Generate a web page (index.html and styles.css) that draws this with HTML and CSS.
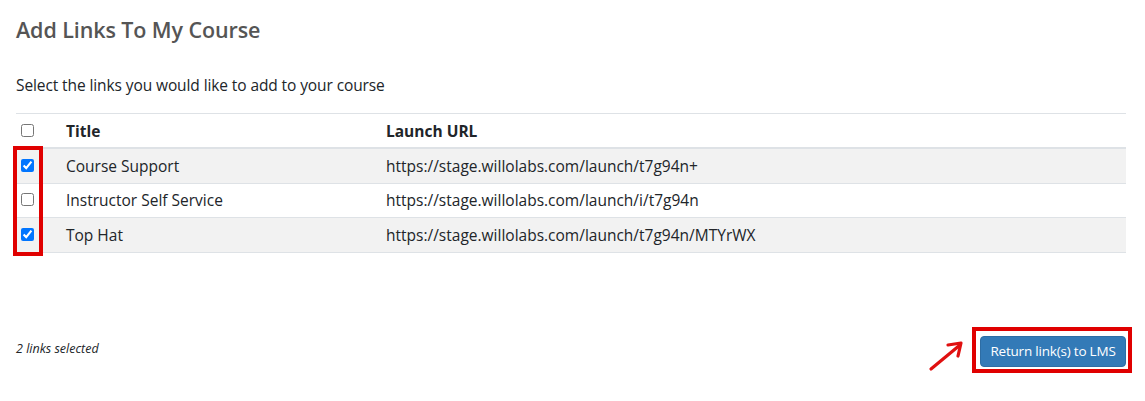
FILE: index.html
```html
<!DOCTYPE html>
<html>
<head>
<meta charset="utf-8">
<link rel="stylesheet" href="styles.css">
</head>
<body>
<div class="page">
  <h1 class="title">Add Links To My Course</h1>
  <p class="lead">Select the links you would like to add to your course</p>
  <div class="table-wrap">
    <table class="links">
      <thead>
        <tr>
          <th class="c-check"><input type="checkbox"></th>
          <th class="c-title">Title</th>
          <th class="c-url">Launch URL</th>
        </tr>
      </thead>
      <tbody>
        <tr class="odd">
          <td class="c-check"><input type="checkbox" checked></td>
          <td>Course Support</td>
          <td>https://stage.willolabs.com/launch/t7g94n+</td>
        </tr>
        <tr>
          <td class="c-check"><input type="checkbox"></td>
          <td>Instructor Self Service</td>
          <td>https://stage.willolabs.com/launch/i/t7g94n</td>
        </tr>
        <tr class="odd">
          <td class="c-check"><input type="checkbox" checked></td>
          <td>Top Hat</td>
          <td>https://stage.willolabs.com/launch/t7g94n/MTYrWX</td>
        </tr>
      </tbody>
    </table>
    <div class="mark-checks"></div>
  </div>
  <div class="footer">
    <span class="count">2 links selected</span>
    <div class="action">
      <svg class="arrow" width="40" height="34" viewBox="0 0 40 34">
        <line x1="4" y1="30" x2="33" y2="6" stroke="#e01010" stroke-width="3.2" stroke-linecap="round"/>
        <polyline points="21,6 34,4 31,17" fill="none" stroke="#e01010" stroke-width="3.2" stroke-linecap="round" stroke-linejoin="round"/>
      </svg>
      <div class="mark-btn">
        <button class="btn">Return link(s) to LMS</button>
      </div>
    </div>
  </div>
</div>
</body>
</html>
```
FILE: styles.css
```css
html, body {
  margin: 0;
  padding: 0;
  background: #fff;
}
body {
  font-family: "Open Sans", "Noto Sans", sans-serif;
  color: #212529;
}
.page {
  padding: 0 19px 0 16px;
}
.title {
  margin: 0;
  padding-top: 15px;
  font-size: 21.5px;
  font-weight: 600;
  color: #555;
  line-height: 30px;
  letter-spacing: -0.1px;
}
.lead {
  margin: 0;
  padding-top: 29px;
  font-size: 15.5px;
  line-height: 22px;
  letter-spacing: -0.1px;
  height: 39px;
}
.table-wrap {
  position: relative;
}
.links {
  width: 100%;
  border-collapse: collapse;
  font-size: 15.5px;
}
.links th, .links td {
  text-align: left;
  border-top: 1px solid #dee2e6;
  padding: 0 12px;
  height: 33.5px;
  vertical-align: middle;
}
.links thead th {
  border-bottom: 2px solid #dee2e6;
  font-weight: 700;
  height: 33px;
}
.links tbody tr:last-child td {
  border-bottom: 1px solid #dee2e6;
}
.links tr.odd td {
  background: #f2f2f2;
}
.links .c-check {
  width: 14px;
  padding: 0 20px 0 4px;
}
.links .c-title {
  width: 296px;
}
.links input {
  margin: 3px 0 0 1px;
  width: 13px;
  height: 13px;
}
.mark-checks {
  position: absolute;
  left: -3px;
  top: 33px;
  width: 22px;
  height: 102px;
  border: 4px solid #e00000;
}
.footer {
  display: flex;
  justify-content: space-between;
  align-items: center;
  margin-top: 74px;
}
.count {
  font-size: 12.5px;
  font-style: italic;
  margin-top: -2px;
}
.action {
  display: flex;
  align-items: center;
  margin-right: -6px;
}
.arrow {
  margin-right: 5px;
  margin-top: 12px;
}
.mark-btn {
  border: 4px solid #e00000;
  padding: 5px 2px 2px 4px;
}
.btn {
  display: block;
  background: #337ab7;
  border: 1px solid #2e6da4;
  border-radius: 4px;
  color: #fff;
  font-family: "Open Sans", "Noto Sans", sans-serif;
  font-size: 13.5px;
  letter-spacing: -0.2px;
  height: 31px;
  width: 146px;
  padding: 0;
}
```
